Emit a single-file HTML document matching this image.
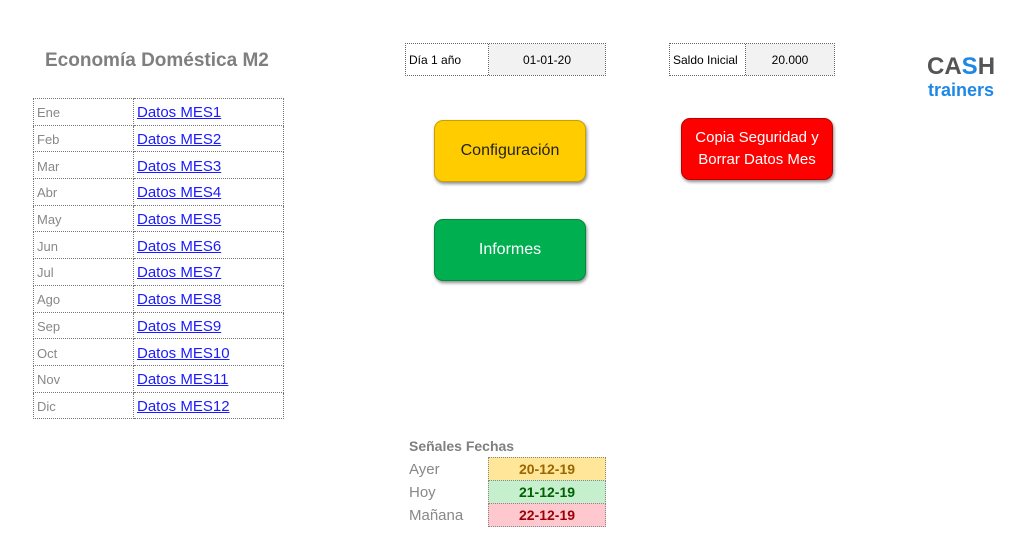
<!DOCTYPE html><html><head><meta charset="utf-8"><style>
body{margin:0;width:1024px;height:560px;background:#fff;position:relative;font-family:"Liberation Sans",sans-serif;overflow:hidden}
.a{position:absolute}
.t{position:absolute;left:33px;top:98px;border-collapse:collapse}
.t td{border:1px dotted #777;height:23.7px;padding:2px 3px 0 3px;font-size:13px;color:#888}
.t td.l{width:93px}.t td.r{width:143px;color:#1a1aff;text-decoration:underline;font-size:15px}
.box{position:absolute;border:1px dotted #666;display:flex;font-size:12px}
.box div{display:flex;align-items:center;padding:0 3px}
.btn{position:absolute;box-sizing:border-box;border-radius:9px;display:flex;align-items:center;justify-content:center;text-align:center;font-size:16px;box-shadow:1px 2px 3px rgba(0,0,0,.45)}
.d{position:absolute;left:488px;width:116px;height:22px;border:1px dotted #888;font-weight:bold;font-size:14px;display:flex;align-items:center;justify-content:center}
.lab{position:absolute;left:409px;font-size:15px;color:#888}
</style></head><body>
<div class="a" style="left:45px;top:50px;font-size:19px;font-weight:bold;color:#7f7f7f">Economía Doméstica M2</div>
<table class="t">
<tr><td class="l">Ene</td><td class="r">Datos MES1</td></tr>
<tr><td class="l">Feb</td><td class="r">Datos MES2</td></tr>
<tr><td class="l">Mar</td><td class="r">Datos MES3</td></tr>
<tr><td class="l">Abr</td><td class="r">Datos MES4</td></tr>
<tr><td class="l">May</td><td class="r">Datos MES5</td></tr>
<tr><td class="l">Jun</td><td class="r">Datos MES6</td></tr>
<tr><td class="l">Jul</td><td class="r">Datos MES7</td></tr>
<tr><td class="l">Ago</td><td class="r">Datos MES8</td></tr>
<tr><td class="l">Sep</td><td class="r">Datos MES9</td></tr>
<tr><td class="l">Oct</td><td class="r">Datos MES10</td></tr>
<tr><td class="l">Nov</td><td class="r">Datos MES11</td></tr>
<tr><td class="l">Dic</td><td class="r">Datos MES12</td></tr>
</table>
<div class="box" style="left:405px;top:43px;width:199px;height:31px"><div style="width:76px;border-right:1px dotted #666">Día 1 año</div><div style="flex:1;justify-content:center;background:#f2f2f2">01-01-20</div></div>
<div class="box" style="left:669px;top:43px;width:164px;height:31px"><div style="width:69px;border-right:1px dotted #666">Saldo Inicial</div><div style="flex:1;justify-content:center;background:#f2f2f2">20.000</div></div>
<div class="a" style="left:927px;top:53px;font-size:24px;font-weight:bold;color:#555;line-height:28px">CA<span style="color:#1e88e5">S</span>H</div>
<div class="a" style="left:928px;top:80px;font-size:18px;font-weight:bold;color:#1e88e5">trainers</div>
<div class="btn" style="left:434px;top:120px;width:152px;height:62px;background:#ffcc00;border:1px solid #c9a000;color:#222">Configuración</div>
<div class="btn" style="left:434px;top:219px;width:152px;height:62px;background:#00b050;border:1px solid #008a3c;color:#fff">Informes</div>
<div class="btn" style="left:681px;top:118px;width:152px;height:62px;background:#ff0000;border:1px solid #b00;color:#fff;line-height:22px;font-size:15px">Copia Seguridad y<br>Borrar Datos Mes</div>
<div class="a" style="left:409px;top:438px;font-size:14px;font-weight:bold;color:#7f7f7f">Señales Fechas</div>
<div class="lab" style="top:461px">Ayer</div>
<div class="lab" style="top:484px">Hoy</div>
<div class="lab" style="top:507px">Mañana</div>
<div class="d" style="top:457px;background:#ffe699;color:#9c6500">20-12-19</div>
<div class="d" style="top:480px;background:#c6efce;color:#006100">21-12-19</div>
<div class="d" style="top:503px;background:#ffc7ce;color:#9c0006">22-12-19</div>
</body></html>
